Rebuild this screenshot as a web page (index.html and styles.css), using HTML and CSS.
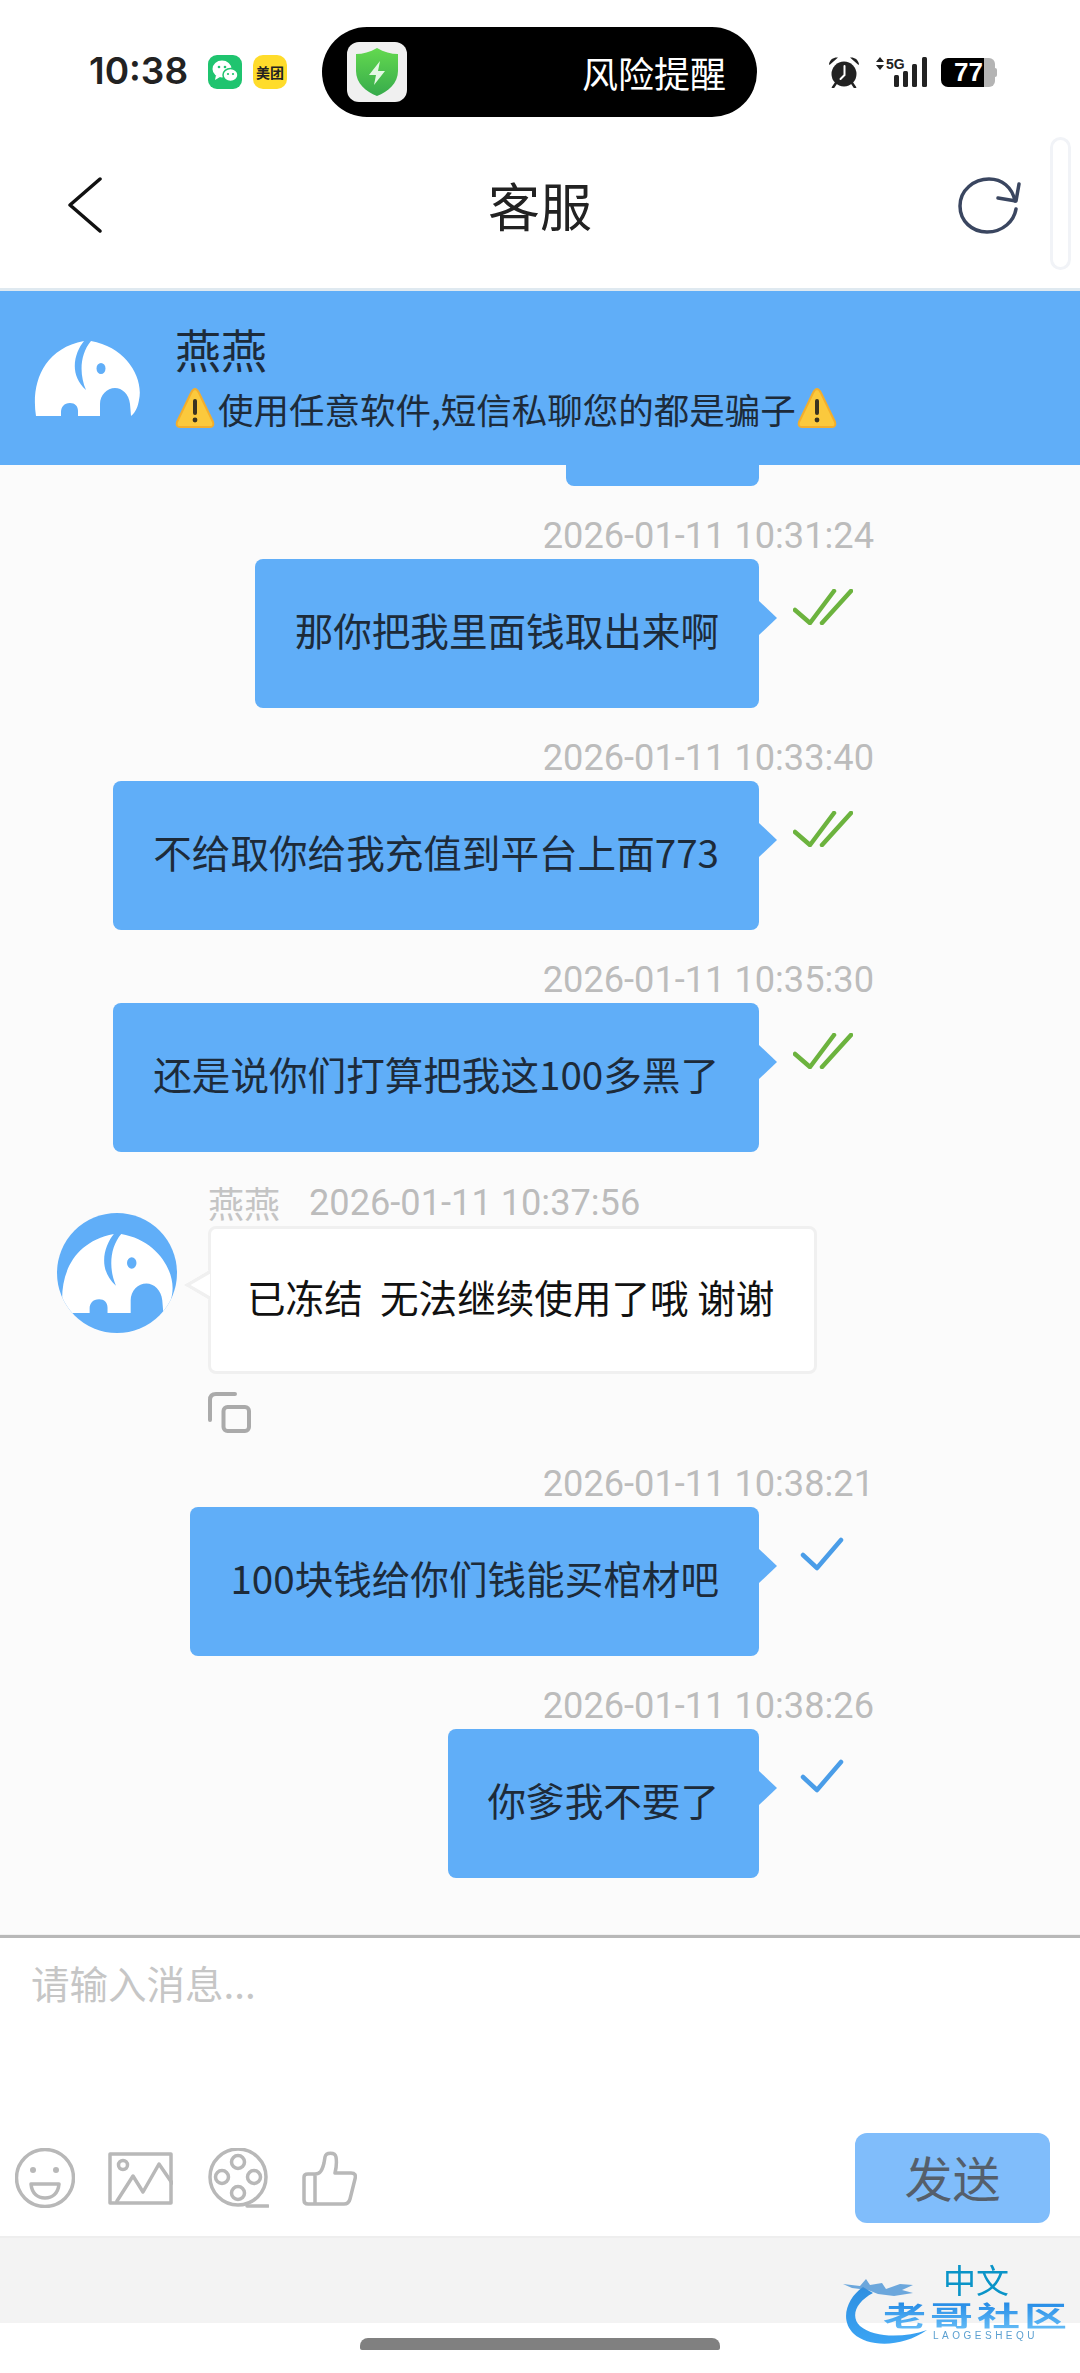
FILE: index.html
```html
<!DOCTYPE html>
<html lang="zh-CN">
<head>
    <meta charset="UTF-8">
    <meta name="viewport" content="width=device-width, initial-scale=1.0">
    <title>客服</title>
    <link rel="stylesheet" href="styles.css">
</head>
<body>
    <svg class="defs" width="0" height="0">
        <symbol id="elephant" viewBox="0 0 106 76">
            <path fill-rule="evenodd" d="M2 76C-3 45 8 9 50 1C41 12 34 34 52 50C45 34 46 14 57 1C92 7 110 38 105 60C104 66 102 72 97 76L96 64C95 54 88 48 81 48C73 48 66 55 66 64V76H44V71C44 66 41 63 36 63C30 63 27 67 27 72V76ZM67 23A4.500 5.500 0 1 0 67 34A4.500 5.500 0 1 0 67 23Z"/>
        </symbol>
        <symbol id="warn" viewBox="0 0 40 42">
            <path d="M20 2C22 2 23 4 24 6L38 35C39 38 38 40 35 40H5C2 40 1 38 2 35L16 6C17 4 18 2 20 2Z" fill="#fbc93d" stroke="#f3ae2c" stroke-width="2"/>
            <rect x="18" y="12" width="4" height="16" rx="2" fill="#3a3320"/>
            <circle cx="20" cy="33" r="2.4" fill="#3a3320"/>
        </symbol>
        <symbol id="double-check" viewBox="0 0 60 36">
            <path d="M2 21L17 34L41 2M29 34L58 2" fill="none" stroke="#6cb33e" stroke-width="4.500" stroke-linecap="round" stroke-linejoin="round"/>
        </symbol>
        <symbol id="single-check" viewBox="0 0 44 34">
            <path d="M3 18L17 31L41 3" fill="none" stroke="#4a9de8" stroke-width="4.500" stroke-linecap="round" stroke-linejoin="round"/>
        </symbol>
    </svg>

    <div class="status-bar">
        <span class="clock">10:38</span>
        <div class="app-icon wechat">
            <svg width="34" height="34" viewBox="0 0 34 34">
                <ellipse cx="14" cy="14" rx="9.5" ry="8.5" fill="#fff"/>
                <path d="M8 20L7 25L12 22Z" fill="#fff"/>
                <ellipse cx="22.5" cy="20" rx="7.5" ry="6.5" fill="#fff" stroke="#1fc46f" stroke-width="1.5"/>
                <circle cx="11" cy="12" r="1.3" fill="#1fc46f"/>
                <circle cx="17" cy="12" r="1.3" fill="#1fc46f"/>
                <circle cx="20" cy="19" r="1.1" fill="#1fc46f"/>
                <circle cx="25" cy="19" r="1.1" fill="#1fc46f"/>
            </svg>
        </div>
        <div class="app-icon meituan">美团</div>
        <div class="island">
            <div class="shield-tile">
                <svg width="44" height="50" viewBox="0 0 44 50">
                    <defs>
                        <linearGradient id="shieldFill" x1="0" y1="0" x2="0" y2="1">
                            <stop offset="0" stop-color="#63d94f"/>
                            <stop offset="1" stop-color="#37ab4c"/>
                        </linearGradient>
                    </defs>
                    <path d="M22 1C29 5 36 7 43 7V24C43 36 33 45 22 49C11 45 1 36 1 24V7C8 7 15 5 22 1Z" fill="url(#shieldFill)"/>
                    <path d="M25 14L14 28H21L19 38L30 24H23Z" fill="#e4f8e4"/>
                </svg>
            </div>
            <span class="island-text">风险提醒</span>
        </div>
        <div class="sys-icons">
            <svg class="alarm" width="32" height="32" viewBox="0 0 32 32">
                <circle cx="16" cy="18" r="12.5" fill="#222"/>
                <path d="M1 8C2 3 6 1 10 1.500L1.500 9ZM31 8C30 3 26 1 22 1.500L30.500 9Z" fill="#222"/>
                <path d="M8 27L5 31.500M24 27L27 31.500" stroke="#222" stroke-width="2.500" stroke-linecap="round"/>
                <path d="M16.500 10V19L12.500 23" fill="none" stroke="#fff" stroke-width="2" stroke-linecap="round"/>
            </svg>
            <svg class="signal" width="52" height="32" viewBox="0 0 52 32">
                <path d="M5 1L9 6H1ZM5 14L9 9H1Z" fill="#222"/>
                <text x="11" y="12.500" class="signal-label">5G</text>
                <rect x="19" y="19" width="5" height="12" rx="1.500" fill="#222"/>
                <rect x="28" y="15" width="5" height="16" rx="1.500" fill="#222"/>
                <rect x="37" y="8" width="5" height="23" rx="1.500" fill="#222"/>
                <rect x="47" y="1" width="5" height="30" rx="1.500" fill="#222"/>
            </svg>
            <div class="battery">
                <div class="battery-fill">77</div>
                <div class="battery-rest"></div>
            </div>
        </div>
    </div>

    <header class="nav">
        <svg width="34" height="56" viewBox="0 0 34 56">
            <path d="M32 2L2 28L32 54" fill="none" stroke="#111" stroke-width="3.500" stroke-linecap="round" stroke-linejoin="round"/>
        </svg>
        <h1 class="nav-title">客服</h1>
        <svg width="64" height="58" viewBox="0 0 64 58">
            <path d="M58 25C55 11 45 3 32 3C17 3 3 14 3 30C3 45 15 56 30 56C46 56 57 45 59 33" fill="none" stroke="#3a4660" stroke-width="3.500" stroke-linecap="round"/>
            <path d="M62 8L59 25L41 22" fill="none" stroke="#3a4660" stroke-width="3.500" stroke-linecap="round" stroke-linejoin="round"/>
        </svg>
        <div class="scroll-pill"></div>
    </header>

    <section class="notice">
        <svg class="notice-elephant"><use href="#elephant"/></svg>
        <div class="notice-body">
            <div class="notice-name">燕燕</div>
            <div class="notice-text">
                <svg class="warn-icon"><use href="#warn"/></svg>
                <span>使用任意软件,短信私聊您的都是骗子</span>
                <svg class="warn-icon"><use href="#warn"/></svg>
            </div>
        </div>
    </section>

    <main class="chat">
        <div class="clipped-bubble"></div>

        <div class="msg-out">
            <div class="msg-time">2026-01-11 10:31:24</div>
            <div class="msg-row">
                <div class="bubble">那你把我里面钱取出来啊</div>
                <div class="msg-state"><svg class="check-double"><use href="#double-check"/></svg></div>
            </div>
        </div>

        <div class="msg-out">
            <div class="msg-time">2026-01-11 10:33:40</div>
            <div class="msg-row">
                <div class="bubble">不给取你给我充值到平台上面773</div>
                <div class="msg-state"><svg class="check-double"><use href="#double-check"/></svg></div>
            </div>
        </div>

        <div class="msg-out">
            <div class="msg-time">2026-01-11 10:35:30</div>
            <div class="msg-row">
                <div class="bubble">还是说你们打算把我这100多黑了</div>
                <div class="msg-state"><svg class="check-double"><use href="#double-check"/></svg></div>
            </div>
        </div>

        <div class="msg-in">
            <div class="avatar"><svg class="avatar-elephant"><use href="#elephant"/></svg></div>
            <div class="msg-in-body">
                <div class="msg-in-head"><span>燕燕</span><span>2026-01-11 10:37:56</span></div>
                <div class="bubble-in">已冻结&nbsp;&nbsp;无法继续使用了哦 谢谢</div>
                <svg class="copy-icon" width="43" height="41" viewBox="0 0 43 41">
                    <path d="M2 28V8Q2 2 8 2H27" fill="none" stroke="#aaa" stroke-width="4" stroke-linecap="round"/>
                    <rect x="15.500" y="15" width="25.500" height="24" rx="4" fill="none" stroke="#aaa" stroke-width="4"/>
                </svg>
            </div>
        </div>

        <div class="msg-out msg-after-in">
            <div class="msg-time">2026-01-11 10:38:21</div>
            <div class="msg-row">
                <div class="bubble">100块钱给你们钱能买棺材吧</div>
                <div class="msg-state"><svg class="check-single"><use href="#single-check"/></svg></div>
            </div>
        </div>

        <div class="msg-out">
            <div class="msg-time">2026-01-11 10:38:26</div>
            <div class="msg-row">
                <div class="bubble">你爹我不要了</div>
                <div class="msg-state"><svg class="check-single"><use href="#single-check"/></svg></div>
            </div>
        </div>
    </main>

    <section class="composer">
        <div class="composer-input">请输入消息...</div>
        <div class="composer-tools">
            <div class="tool-icons">
                <svg width="60" height="60" viewBox="0 0 60 60">
                    <circle cx="30" cy="30" r="28.500" class="tool-line"/>
                    <circle cx="18" cy="22" r="3" fill="#b8b8b8"/>
                    <circle cx="41" cy="22" r="3" fill="#b8b8b8"/>
                    <path d="M16 36H44C43 46 37 50 30 50C23 50 17 46 16 36Z" class="tool-line"/>
                </svg>
                <svg width="65" height="53" viewBox="0 0 65 53">
                    <rect x="2" y="2" width="61" height="49" class="tool-line"/>
                    <circle cx="15" cy="13" r="4.500" class="tool-line"/>
                    <path d="M9 49L25 24L35 40L51 12L64 31" class="tool-line"/>
                </svg>
                <svg width="63" height="60" viewBox="0 0 63 60">
                    <circle cx="32" cy="29" r="28" class="tool-line"/>
                    <circle cx="32" cy="14" r="6.500" class="tool-line"/>
                    <circle cx="16" cy="29" r="6.500" class="tool-line"/>
                    <circle cx="48" cy="29" r="6.500" class="tool-line"/>
                    <circle cx="32" cy="45" r="6.500" class="tool-line"/>
                    <path d="M41 58H62" class="tool-line"/>
                </svg>
                <svg width="55" height="55" viewBox="0 0 55 55">
                    <path d="M12 53H6Q2 53 2 49V26Q2 23 6 23H13C18 23 20 20 22 12L23 6C24 1 33 1 34 6C35 12 34 18 33 22H49C53 22 54 24 53 28L48 48C47 52 45 53 42 53ZM13 23V53" class="tool-line"/>
                </svg>
            </div>
            <button class="send-btn">发送</button>
        </div>
    </section>

    <div class="footer-band"></div>
    <div class="home-area"><div class="home-bar"></div></div>

    <div class="watermark">
        <svg class="wm-dragon" width="100" height="72" viewBox="0 0 100 72">
            <defs>
                <linearGradient id="wmFill" x1="0" y1="0" x2="0" y2="1">
                    <stop offset="0" stop-color="#2e8fe0"/>
                    <stop offset="1" stop-color="#3ba4f4"/>
                </linearGradient>
            </defs>
            <path d="M21 11C5 22 -3 44 12 58C26 71 60 72 85 54C62 62 32 62 18 50C8 40 14 26 31 17Z" fill="url(#wmFill)"/>
            <path d="M1 8L18 10L24 3L28 9L40 7L44 13L58 8L71 9L60 14L71 17L52 20L36 18L26 14L10 12Z" fill="#3f8ed4" opacity="0.75"/>
        </svg>
        <span class="wm-zh">中文</span>
        <span class="wm-name">老哥社区</span>
        <span class="wm-pinyin">LAOGESHEQU</span>
    </div>
</body>
</html>
```

FILE: styles.css
```css
* {
    box-sizing: border-box;
    margin: 0;
    padding: 0;
}

html, body {
    width: 1080px;
    height: 2373px;
    overflow: hidden;
}

body {
    position: relative;
    display: flex;
    flex-direction: column;
    background: #fff;
    color: #1d2b3a;
    font-family: "Noto Sans CJK SC", "Noto Sans", sans-serif;
    font-weight: 400;
}

.defs {
    position: absolute;
}

/* status bar */
.status-bar {
    height: 135px;
    display: flex;
    align-items: center;
    padding: 9px 0 0 89px;
    flex-shrink: 0;
}

.clock {
    width: 119px;
    margin-top: -3px;
    font-family: Inter, sans-serif;
    font-size: 37px;
    font-weight: 600;
    color: #222;
}

.app-icon {
    width: 34px;
    height: 34px;
    border-radius: 9px;
    margin-right: 11px;
    display: flex;
    align-items: center;
    justify-content: center;
}

.wechat {
    background: #1fc46f;
}

.meituan {
    background: #ffdc2b;
    color: #222;
    font-size: 14px;
    font-weight: 700;
    line-height: 1;
    border-radius: 10px;
}

.island {
    width: 435px;
    height: 90px;
    margin-left: 24px;
    padding: 0 31px 0 25px;
    border-radius: 45px;
    background: #000;
    display: flex;
    align-items: center;
    justify-content: space-between;
}

.shield-tile {
    width: 60px;
    height: 60px;
    border-radius: 12px;
    background: #f0f0f0;
    display: flex;
    align-items: center;
    justify-content: center;
}

.island-text {
    color: #fff;
    font-size: 36px;
}

.sys-icons {
    margin-left: 71px;
    display: flex;
    align-items: center;
}

.signal {
    margin-left: 15px;
}

.signal-label {
    font-family: "Liberation Sans", sans-serif;
    font-size: 14px;
    font-weight: 700;
    fill: #222;
}

.battery {
    margin-left: 14px;
    height: 29px;
    display: flex;
    position: relative;
}

.battery-fill {
    width: 43px;
    background: #000;
    border-radius: 7px 0 0 7px;
    color: #fff;
    font-family: "Liberation Sans", sans-serif;
    font-size: 26px;
    font-weight: 700;
    line-height: 29px;
    text-align: right;
    padding-right: 1px;
}

.battery-rest {
    width: 11px;
    background: #b4b4b4;
    border-radius: 0 6px 6px 0;
}

.battery::after {
    content: "";
    position: absolute;
    right: -2px;
    top: 10px;
    width: 2px;
    height: 9px;
    background: #b4b4b4;
    border-radius: 0 2px 2px 0;
}

/* nav */
.nav {
    position: relative;
    height: 156px;
    flex-shrink: 0;
    display: flex;
    align-items: center;
    justify-content: space-between;
    padding: 0 59px 14px 68px;
    border-bottom: 3px solid #dfe9f0;
}

.nav-title {
    font-size: 52px;
    font-weight: 400;
    line-height: 1;
    color: #222;
    margin-left: 21px;
}

.scroll-pill {
    position: absolute;
    left: 1050px;
    top: 2px;
    width: 21px;
    height: 133px;
    border-radius: 11px;
    background: #fff;
    border: 3px solid #f1f3f7;
}

/* blue notice */
.notice {
    height: 174px;
    flex-shrink: 0;
    background: #60aef8;
    display: flex;
    padding-left: 34px;
    position: relative;
    z-index: 1;
}

.notice-elephant {
    width: 106px;
    height: 76px;
    margin-top: 49px;
    fill: #fff;
}

.notice-body {
    margin-left: 35px;
    padding-top: 28px;
}

.notice-name {
    font-size: 46px;
    line-height: 58px;
    color: #1d2b3a;
}

.notice-text {
    display: flex;
    align-items: center;
    height: 50px;
    margin-top: 6px;
    font-size: 35.5px;
    color: #1d2b3a;
}

.warn-icon {
    width: 40px;
    height: 42px;
    flex-shrink: 0;
}

.notice-text span {
    margin: 0 1px 0 3px;
}

/* chat */
.chat {
    height: 1470px;
    flex-shrink: 0;
    background: #fbfbfb;
    border-bottom: 1px solid #f2f2f2;
}

.clipped-bubble {
    width: 193px;
    height: 21px;
    margin-left: 566px;
    background: #60aef8;
    border-radius: 0 0 8px 8px;
}

.msg-out {
    margin-top: 27px;
    padding-right: 208px;
    display: flex;
    flex-direction: column;
    align-items: flex-end;
}

.msg-after-in {
    margin-top: 28px;
}

.msg-time {
    height: 46px;
    margin-right: -2px;
    font-family: Roboto, sans-serif;
    font-size: 36.200px;
    line-height: 46px;
    color: #bcbcbc;
}

.msg-row {
    display: flex;
}

.bubble {
    position: relative;
    height: 149px;
    padding: 0 40px;
    background: #60aef8;
    border-radius: 8px;
    font-size: 38.600px;
    line-height: 141px;
    color: #1d2b3a;
    white-space: nowrap;
}

.bubble::after {
    content: "";
    position: absolute;
    left: 100%;
    top: 42px;
    border-style: solid;
    border-width: 17px 0 17px 18px;
    border-color: transparent transparent transparent #60aef8;
}

.msg-state {
    width: 113px;
    padding-top: 30px;
}

.check-double {
    display: block;
    width: 60px;
    height: 36px;
    margin-left: 34px;
}

.check-single {
    display: block;
    width: 44px;
    height: 34px;
    margin-left: 41px;
}

.msg-in {
    margin-top: 27px;
    padding-left: 57px;
    display: flex;
}

.avatar {
    width: 120px;
    height: 120px;
    margin-top: 34px;
    border-radius: 50%;
    background: #60aef8;
    overflow: hidden;
    flex-shrink: 0;
}

.avatar-elephant {
    display: block;
    width: 114px;
    height: 80px;
    margin: 20px 0 0 3px;
    fill: #fff;
}

.msg-in-body {
    margin-left: 31px;
}

.msg-in-head {
    height: 47px;
    display: flex;
    gap: 29px;
    font-size: 36px;
    line-height: 47px;
    color: #c4c4c4;
}

.msg-in-head span:last-child {
    font-family: Roboto, sans-serif;
    font-size: 36.200px;
    color: #bcbcbc;
}

.bubble-in {
    position: relative;
    width: 609px;
    height: 148px;
    padding-left: 36px;
    background: #fff;
    border: 3px solid #f0f0f0;
    border-radius: 8px;
    font-size: 38.600px;
    line-height: 134px;
    color: #111;
    white-space: nowrap;
}

.bubble-in::before {
    content: "";
    position: absolute;
    left: -12.500px;
    top: 45px;
    width: 19px;
    height: 19px;
    background: #fff;
    border-left: 3px solid #f0f0f0;
    border-bottom: 3px solid #f0f0f0;
    transform: scaleX(1.7) rotate(45deg);
    clip-path: polygon(0 0, 100% 100%, 0 100%);
}

.copy-icon {
    display: block;
    margin-top: 18px;
}

/* composer */
.composer {
    height: 303px;
    flex-shrink: 0;
    border-top: 3px solid #b8b8b8;
    border-bottom: 2px solid #eee;
    padding-bottom: 13px;
    display: flex;
    flex-direction: column;
    justify-content: space-between;
    background: #fff;
}

.composer-input {
    padding: 21px 0 0 31px;
    font-size: 38.500px;
    line-height: 46px;
    color: #c6c6c6;
}

.composer-tools {
    display: flex;
    align-items: center;
    justify-content: space-between;
    padding: 0 30px 0 15px;
}

.tool-icons {
    display: flex;
    align-items: center;
    gap: 33px;
}

.tool-line {
    fill: none;
    stroke: #b8b8b8;
    stroke-width: 3.500px;
    stroke-linejoin: round;
    stroke-linecap: round;
}

.send-btn {
    width: 195px;
    height: 90px;
    border: none;
    border-radius: 12px;
    background: #80bdfb;
    color: #555f6b;
    font-family: inherit;
    font-size: 48px;
    line-height: 1;
    padding-bottom: 5px;
}

.footer-band {
    height: 85px;
    flex-shrink: 0;
    background: #f3f3f3;
}

.home-area {
    flex: 1;
    display: flex;
    justify-content: center;
    padding-top: 15px;
}

.home-bar {
    width: 360px;
    height: 12px;
    background: #808080;
    border-radius: 8px 8px 2px 2px;
}

/* watermark logo, sits over the footer */
.watermark {
    position: absolute;
    left: 840px;
    top: 2262px;
    width: 230px;
    height: 90px;
    filter: blur(0.4px);
}

.wm-dragon {
    position: absolute;
    left: 2px;
    top: 14px;
}

.wm-zh {
    position: absolute;
    left: 103px;
    top: 1px;
    font-size: 33px;
    line-height: 33px;
    color: #0a94c8;
}

.wm-name {
    position: absolute;
    left: 43px;
    top: 30px;
    font-size: 43px;
    font-weight: 700;
    line-height: 44px;
    letter-spacing: 4px;
    white-space: nowrap;
    background: linear-gradient(#1e86e4, #62baf6);
    -webkit-background-clip: text;
    background-clip: text;
    color: transparent;
    transform: scale(1, 0.66);
    transform-origin: left center;
}

.wm-pinyin {
    position: absolute;
    left: 93px;
    top: 68px;
    font-family: "Liberation Sans", sans-serif;
    font-size: 10px;
    line-height: 12px;
    letter-spacing: 3.500px;
    color: #5a9fd0;
    white-space: nowrap;
}
```
